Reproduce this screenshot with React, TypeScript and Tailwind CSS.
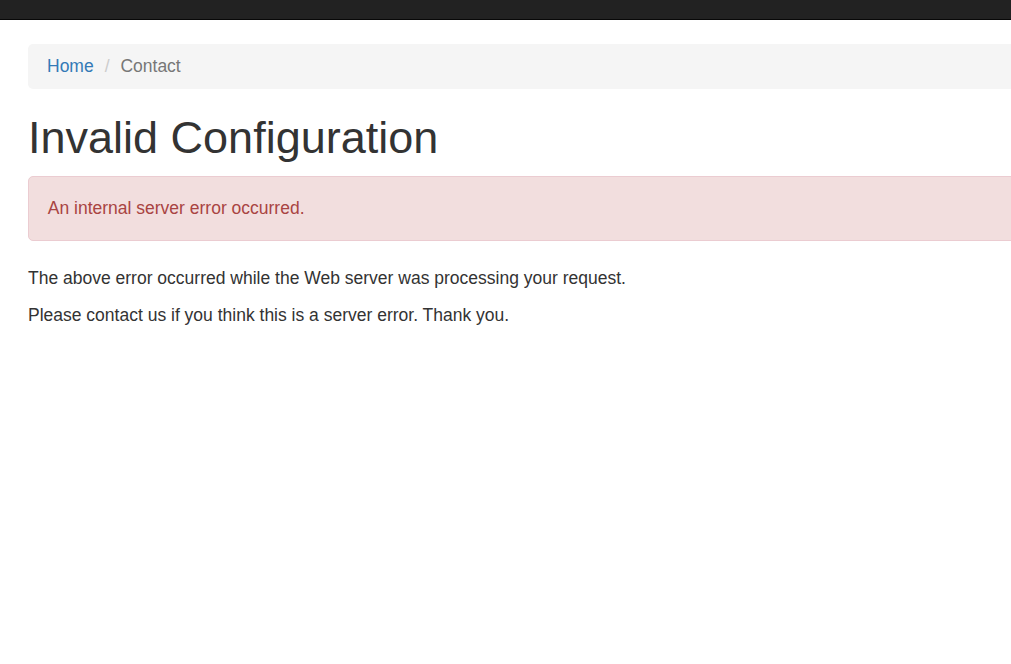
export default function App() {
  return (
    <div
      className="min-h-screen w-full overflow-hidden bg-white text-[#333] text-[17.5px] leading-[25px]"
      style={{ fontFamily: '"Liberation Sans", Arial, sans-serif' }}
    >
      {/* Navbar */}
      <div className="h-[20px] w-full bg-[#222] border-b border-[#080808]" />

      <div className="w-[1100px] pl-[28px] pt-[24px]">
        {/* Breadcrumb */}
        <ul className="flex items-center h-[45px] px-[19px] bg-[#f5f5f5] rounded-[5px] mb-[24px]">
          <li>
            <a href="#" className="text-[#337ab7]">Home</a>
          </li>
          <li className="text-[#777] ml-[5px]">
            <span className="text-[#ccc] px-[6px]">/&nbsp;</span>
            Contact
          </li>
        </ul>

        {/* Title */}
        <h1 className="text-[45px] leading-[49.5px] font-normal mb-[13px]">
          Invalid Configuration
        </h1>

        {/* Alert */}
        <div className="bg-[#f2dede] border border-[#ebccd1] text-[#a94442] rounded-[5px] px-[18.75px] py-[19px] mb-[25px]">
          An internal server error occurred.
        </div>

        <p className="mb-[12.5px]">
          The above error occurred while the Web server was processing your request.
        </p>
        <p className="mb-[12.5px]">
          Please contact us if you think this is a server error. Thank you.
        </p>
      </div>
    </div>
  );
}
